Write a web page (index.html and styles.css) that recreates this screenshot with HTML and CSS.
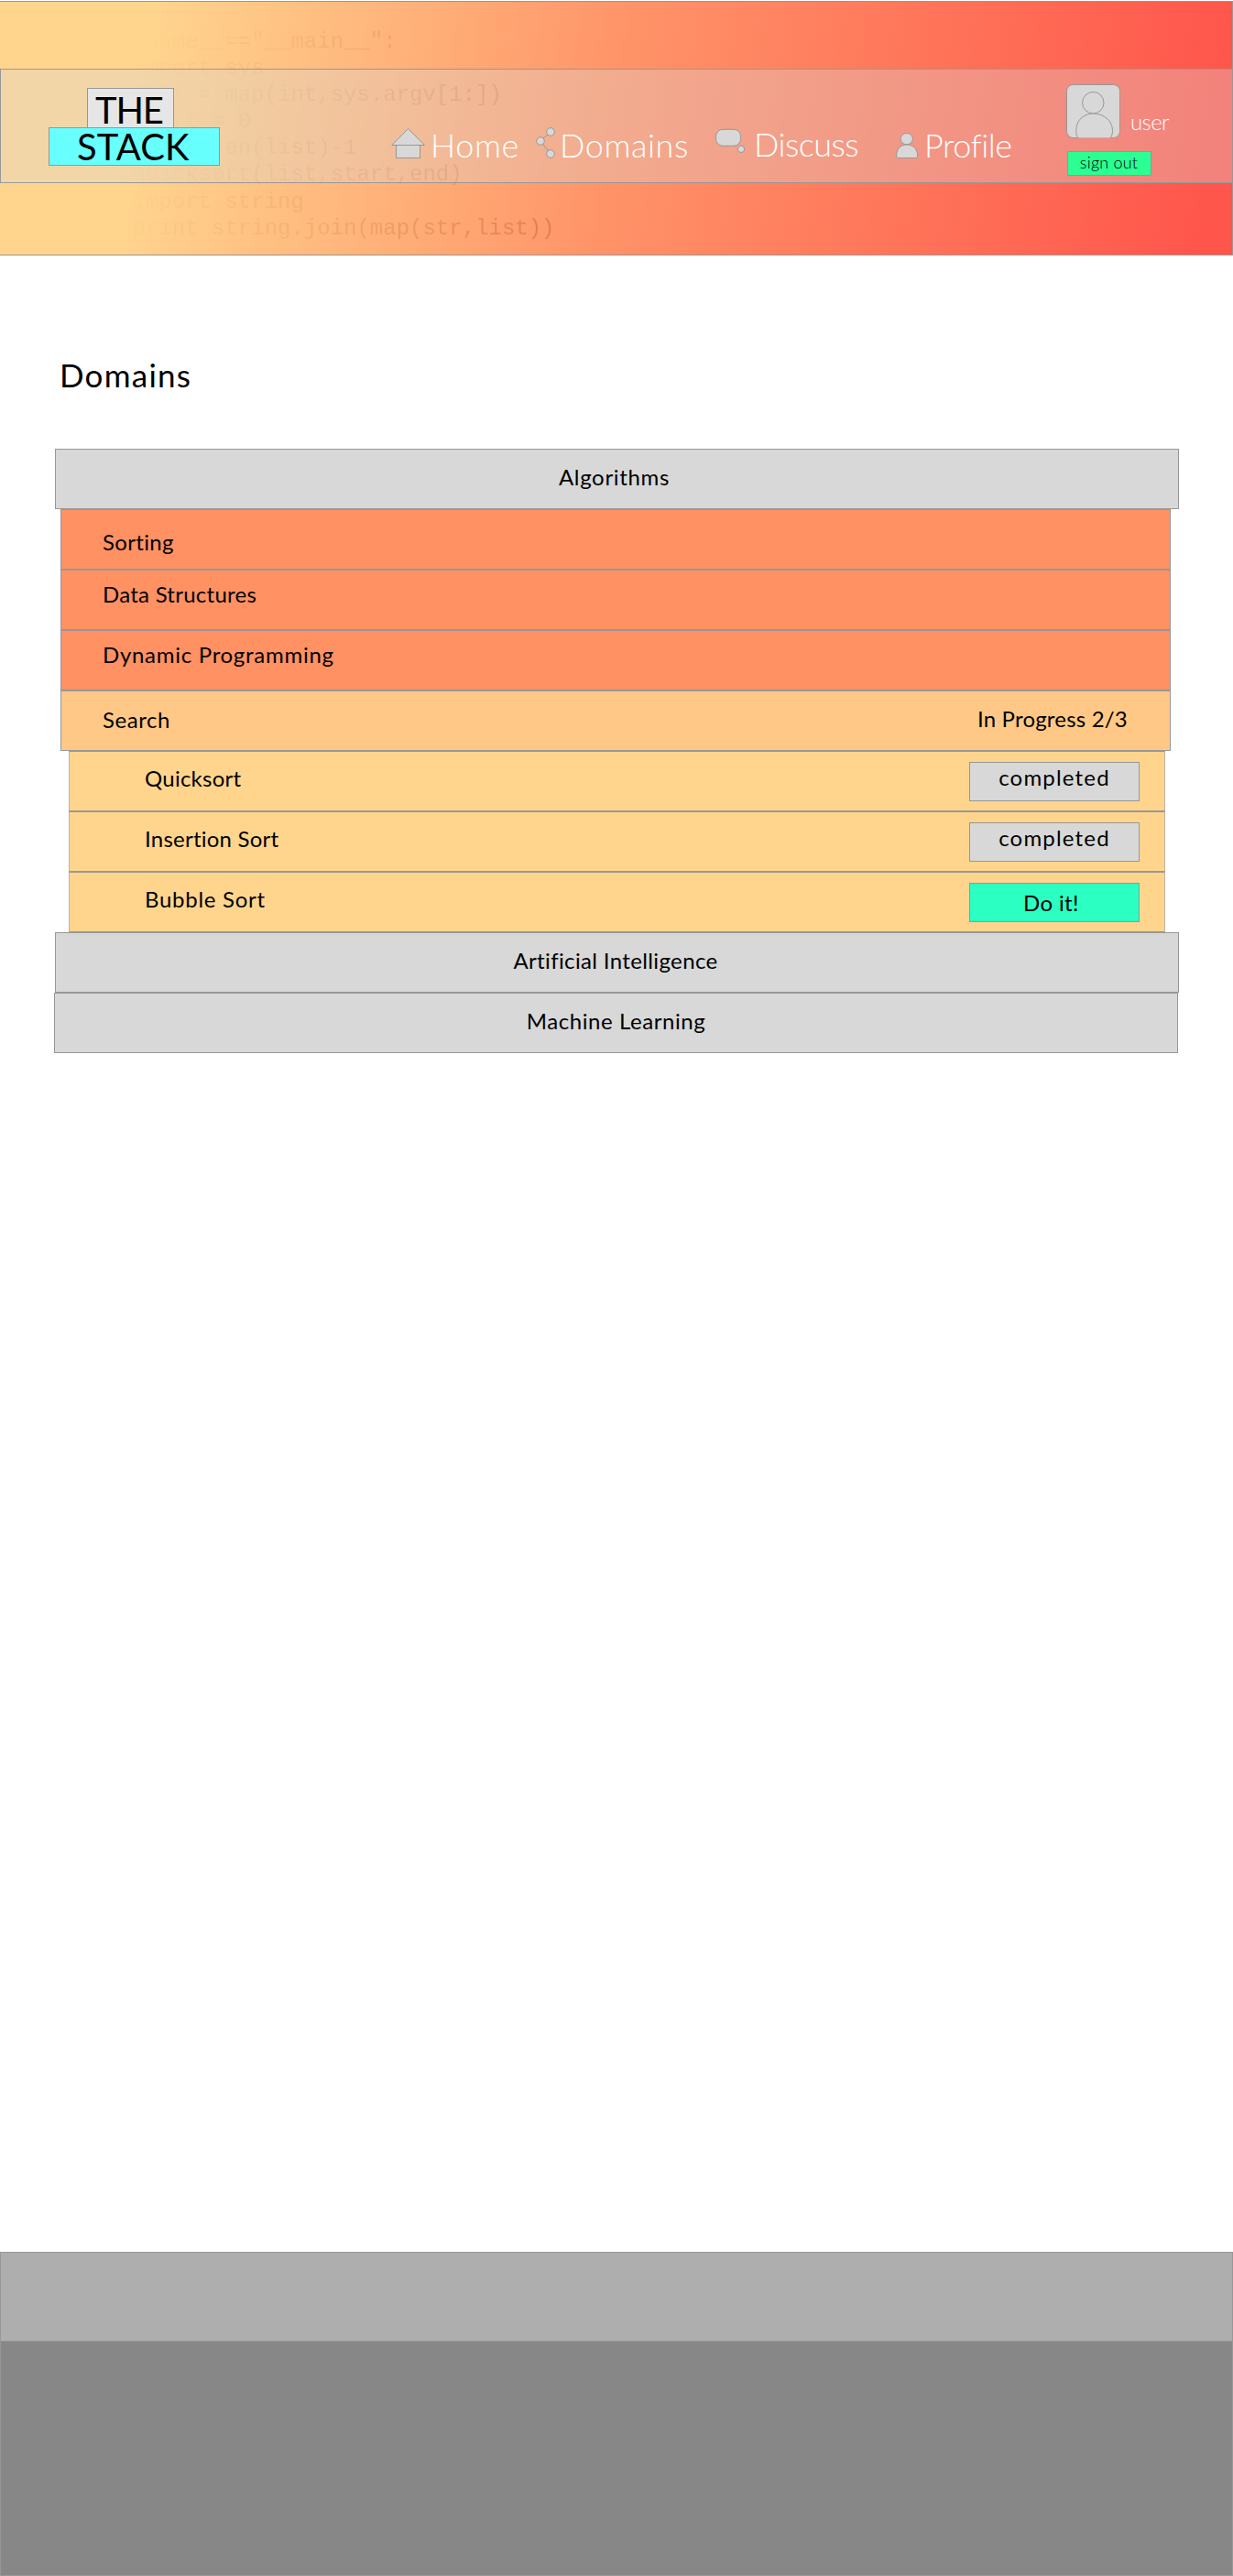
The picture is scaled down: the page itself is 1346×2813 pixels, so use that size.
FILE: index.html
```html
<!DOCTYPE html>
<html lang="en">
<head>
<meta charset="utf-8">
<title>The Stack - Domains</title>
<link rel="stylesheet" href="styles.css">
</head>
<body>
<header class="banner">
<pre class="code">if __name__=="__main__":
    import sys
       t = map(int,sys.argv[1:])
       rt = 0
           en(list)-1
    quicksort(list,start,end)
    import string
    print string.join(map(str,list))</pre>
  <nav class="nav">
    <a class="logo">
      <span class="logo-top">THE</span>
      <span class="logo-bottom">STACK</span>
    </a>
    <div class="links">
      <a class="link home">
        <svg class="icon" width="38" height="44" viewBox="0 0 38 44"><rect x="5.5" y="22.5" width="26" height="14"/><path d="M18.5 4.5 36.5 22.5H.8z"/></svg>
        <span>Home</span>
      </a>
      <a class="link domains">
        <svg class="icon" width="22" height="44" viewBox="0 0 22 44"><path d="M16 8 5 18l11 14" fill="none"/><circle cx="16" cy="8" r="4.3"/><circle cx="5" cy="18" r="4.3"/><circle cx="16" cy="32" r="4.3"/></svg>
        <span>Domains</span>
      </a>
      <a class="link discuss">
        <svg class="icon" width="34" height="44" viewBox="0 0 34 44"><rect x=".5" y="5.3" width="27" height="18" rx="7.5"/><circle cx="28" cy="26.8" r="3.7"/></svg>
        <span>Discuss</span>
      </a>
      <a class="link profile">
        <svg class="icon" width="28" height="44" viewBox="0 0 28 44"><ellipse cx="12.8" cy="15.6" rx="6.6" ry="6.2"/><path d="M1.6 34c0-7.500 4.900-12 11.400-12s11.600 4.500 11.600 12c0 1.700-.8 2.500-2 2.500H3.600c-1.200 0-2-.8-2-2.500z"/></svg>
        <span>Profile</span>
      </a>
    </div>
    <div class="account">
      <div class="who">
        <svg class="icon" width="60" height="60" viewBox="0 0 60 60"><rect x=".5" y=".5" width="58" height="58" rx="7"/><ellipse cx="29.300" cy="20.200" rx="11.700" ry="11.800"/><path d="M13 58.500c-2-2-2.200-5-2.200-8 0-11 8-18.500 18.800-18.500s20.900 7.500 20.900 18.500c0 3-.5 6-2.500 8"/></svg>
        <span class="user">user</span>
      </div>
      <button class="signout">sign out</button>
    </div>
  </nav>
</header>

<main class="content">
  <h1 class="title">Domains</h1>
  <section class="list">
    <div class="row group algorithms"><span>Algorithms</span></div>
    <div class="row topic sorting"><span>Sorting</span></div>
    <div class="row topic data"><span>Data Structures</span></div>
    <div class="row topic dynamic"><span>Dynamic Programming</span></div>
    <div class="row topic search"><span>Search</span><span class="progress">In Progress 2/3</span></div>
    <div class="row task"><span class="quick">Quicksort</span><button class="state">completed</button></div>
    <div class="row task"><span class="insertion">Insertion Sort</span><button class="state">completed</button></div>
    <div class="row task"><span class="bubble">Bubble Sort</span><button class="state todo">Do it!</button></div>
    <div class="row group ai"><span>Artificial Intelligence</span></div>
    <div class="row group ml"><span>Machine Learning</span></div>
  </section>
</main>

<footer>
  <div class="footer-top"></div>
  <div class="footer-bottom"></div>
</footer>
</body>
</html>
```
FILE: styles.css
```css
* { box-sizing: border-box; }

body {
  margin: 0;
  background: #fff;
  color: #000;
  font-family: Lato, "Liberation Sans", sans-serif;
  font-size: 24px;
}

button {
  margin: 0;
  padding: 0;
  border: 1px solid #979797;
  font-family: inherit;
  color: #000;
}

/* Banner */
.banner {
  position: relative;
  height: 278px;
  margin-top: 1px;
  padding-top: 73px;
  border: solid #979797;
  border-width: 1px 1px 1px 0;
  background: linear-gradient(99deg, #ffd58e 12%, #ff9368 50%, #ff554b 98%);
}

.code {
  position: absolute;
  left: 87px;
  top: 29px;
  margin: 0;
  font: 24px/29.100px "Liberation Mono", monospace;
  color: transparent;
  background: linear-gradient(100deg, rgba(160, 100, 30, 0) 11%, rgba(170, 95, 20, .12) 50%, rgba(150, 55, 10, .28) 100%);
  -webkit-background-clip: text;
  background-clip: text;
}

.nav {
  position: relative;
  display: flex;
  align-items: flex-start;
  width: 1346px;
  height: 125px;
  border: 1px solid #979797;
  background: rgba(216, 216, 216, .34);
}

.logo {
  display: flex;
  flex-direction: column;
  align-items: flex-start;
  width: 187px;
  margin: 20px 187px 0 52px;
  font-size: 40px;
}

.logo-top {
  width: 95px;
  height: 44px;
  margin-left: 42px;
  padding: 1px 0 0 8px;
  border: 1px solid #979797;
  background: #e6e6e6;
  line-height: 44px;
  letter-spacing: -1.2px;
}

.logo-bottom {
  width: 187px;
  height: 42px;
  margin-top: -1px;
  padding-left: 30px;
  border: 1px solid #979797;
  background: #68ffff;
  line-height: 40px;
  letter-spacing: .1px;
}

.links {
  display: grid;
  grid-template-columns: 158px 196px 196px 187px;
  padding-top: 60px;
  font-size: 36px;
  font-weight: 300;
  line-height: 44px;
  color: #fff;
}

.link { display: flex; }

.icon {
  flex: none;
  fill: #d8d8d8;
  stroke: #979797;
  stroke-width: 1;
}

.home { letter-spacing: .6px; }
.home .icon { margin-right: 5px; }
.domains { letter-spacing: .6px; }
.domains .icon { margin-right: 4px; }
.discuss { letter-spacing: -.5px; margin-top: -1px; }
.discuss .icon { margin: 1px 8px 0 0; }
.profile { letter-spacing: -.5px; }
.profile .icon { margin-right: 4px; }

.account { padding-top: 16px; }

.who { display: flex; }

.user {
  margin: 21px 0 0 10px;
  font-weight: 300;
  line-height: 40px;
  letter-spacing: -.6px;
  color: #fff;
}

.signout {
  display: block;
  width: 92px;
  height: 27px;
  margin: 12px 0 0 1px;
  padding: 0 1px 3px 0;
  background: #2bff93;
  font-size: 18px;
  font-weight: 300;
  line-height: 22px;
  letter-spacing: .2px;
}

/* Domain list */
.title {
  height: 44px;
  margin: 108px 0 0 65px;
  font-size: 35px;
  font-weight: 400;
  line-height: 44px;
  letter-spacing: 1.250px;
}

.list { padding-top: 59px; }

.row {
  display: flex;
  align-items: center;
  justify-content: space-between;
  height: 66px;
  border: 1px solid #979797;
  line-height: 30px;
}

.group {
  width: 1227px;
  margin-left: 60px;
  justify-content: center;
  background: #d8d8d8;
}

.topic {
  width: 1212px;
  margin-left: 66px;
  padding-left: 45px;
  background: #ff9163;
}

.task {
  width: 1197px;
  margin-left: 75px;
  padding: 0 27px 0 82px;
  background: #ffd58e;
  border-left-color: #bfb39e;
  border-right-color: #bfb39e;
}

.task > span { padding-bottom: 7px; }

.algorithms { padding: 0 6px 5px 0; letter-spacing: .67px; }
.sorting { padding-top: 5px; letter-spacing: .34px; }
.data { padding-bottom: 13px; letter-spacing: .25px; }
.dynamic { padding-bottom: 13px; letter-spacing: .72px; }
.search { padding: 0 46px 3px 45px; letter-spacing: .55px; background: #ffc886; }
.progress { padding-bottom: 2px; letter-spacing: .2px; }
.quick { letter-spacing: .24px; }
.insertion { letter-spacing: .23px; }
.bubble { letter-spacing: .72px; }
.ai { padding: 0 3px 5px 0; letter-spacing: .36px; }
.ml { margin-left: 59px; padding-bottom: 5px; letter-spacing: .57px; }

.state {
  width: 186px;
  height: 43px;
  padding-bottom: 8px;
  background: #d8d8d8;
  font-size: 24px;
  line-height: 30px;
  letter-spacing: 1.190px;
}

.todo {
  padding: 2px 7px 0 0;
  background: #2bffc2;
  letter-spacing: .36px;
}

/* Footer */
footer { margin-top: 1309px; }

.footer-top {
  height: 97px;
  border: 1px solid #979797;
  border-bottom: 0;
  background: #aeaeae;
}

.footer-bottom {
  height: 257px;
  border: 1px solid #979797;
  background: #878787;
}
```
